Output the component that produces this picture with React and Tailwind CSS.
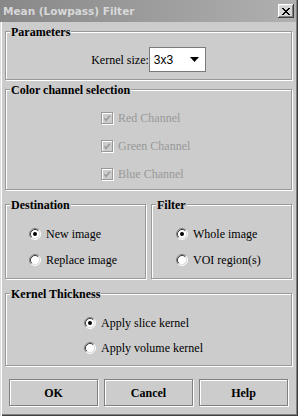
import React from "react";

function Group({ title, className, children }) {
  return (
    <div
      className={`flex flex-col border border-[#999999] shadow-[inset_1px_1px_0_#ffffff,1px_1px_0_#ffffff] ${className}`}
    >
      <span className="-mt-[7px] ml-[4px] w-fit bg-[#cccccc] px-px text-[12px] font-bold leading-[14px] text-black">
        {title}
      </span>
      {children}
    </div>
  );
}

function CheckRow({ label }) {
  return (
    <div className="flex h-[13px] items-center gap-[5px]">
      <span className="flex h-[12px] w-[12px] items-center justify-center border border-[#999999] shadow-[inset_1px_1px_0_#ffffff,1px_1px_0_#ffffff]">
        <svg width="8" height="8" viewBox="0 0 8 8">
          <path d="M1.5 4.2 L3 6.4 L6.8 1.8" stroke="#999999" strokeWidth="1.5" fill="none" />
        </svg>
      </span>
      <span className="leading-[14px] text-[#999999]">{label}</span>
    </div>
  );
}

function Radio({ checked }) {
  return (
    <svg width="12" height="12" viewBox="0 0 12 12" className="shrink-0">
      <circle cx="6" cy="6" r="4.5" fill="#ffffff" />
      <path d="M2.11 9.89A5.5 5.5 0 0 1 9.89 2.11" stroke="#808080" fill="none" />
      <path d="M9.89 2.11A5.5 5.5 0 0 1 2.11 9.89" stroke="#ffffff" fill="none" />
      <path d="M2.82 9.18A4.5 4.5 0 0 1 9.18 2.82" stroke="#404040" fill="none" />
      <path d="M9.18 2.82A4.5 4.5 0 0 1 2.82 9.18" stroke="#dfdfdf" fill="none" />
      {checked && <circle cx="6" cy="6" r="2" fill="#000000" />}
    </svg>
  );
}

function RadioRow({ label, checked }) {
  return (
    <div className="flex h-[13px] items-center gap-[5px]">
      <Radio checked={checked} />
      <span className="leading-[14px]">{label}</span>
    </div>
  );
}

function Button({ children }) {
  return (
    <button className="flex h-[27px] w-[89px] items-center justify-center border border-[#808080] bg-[#cccccc] font-bold leading-[14px] shadow-[inset_1px_1px_0_#ffffff,1px_1px_0_#ffffff]">
      {children}
    </button>
  );
}

export default function App() {
  return (
    <div className="flex h-[416px] w-[298px] flex-col bg-[#cccccc] font-[family-name:Liberation_Serif,serif] text-[12px] text-black shadow-[inset_1px_0_0_#dfdfdf,inset_2px_0_0_#ffffff,inset_-1px_-1px_0_#404040,inset_-2px_-2px_0_#808080]">
      {/* title bar */}
      <div className="mr-[2px] flex h-[22px] shrink-0 items-center justify-between bg-linear-to-r from-[#888888] to-[#b0b0b0] pl-[3px] pr-[2px]">
        <span className="font-[family-name:DejaVu_Sans,sans-serif] text-[10.5px] font-bold leading-none text-[#d8d8d8]">
          Mean (Lowpass) Filter
        </span>
        <span className="flex h-[14px] w-[16px] items-center justify-center bg-[#d4d4d4] shadow-[inset_-1px_-1px_0_#404040,inset_1px_1px_0_#ffffff,inset_-2px_-2px_0_#808080,inset_2px_2px_0_#dfdfdf]">
          <svg width="8" height="7" viewBox="0 0 8 7" shapeRendering="crispEdges">
            <path
              d="M0 0h2v1H0z M6 0h2v1H6z M1 1h2v1H1z M5 1h2v1H5z M2 2h4v1H2z M3 3h2v1H3z M2 4h4v1H2z M1 5h2v1H1z M5 5h2v1H5z M0 6h2v1H0z M6 6h2v1H6z"
              fill="#000000"
            />
          </svg>
        </span>
      </div>

      <div className="flex flex-col pl-[5px] pr-[6px]">
        {/* Parameters */}
        <Group title="Parameters" className="mt-[9px] h-[49px]">
          <div className="mt-[8px] flex items-center justify-center">
            <span className="leading-[14px]">Kernel size:</span>
            <div className="flex h-[25px] w-[57px] items-center justify-between border border-[#7a7a7a] bg-white pl-[4px] pr-[6px]">
              <span className="font-[family-name:Liberation_Sans,sans-serif] text-[12px] leading-none">3x3</span>
              <svg width="9" height="5" viewBox="0 0 9 5">
                <path d="M0 0h9L4.5 5z" fill="#000000" />
              </svg>
            </div>
          </div>
        </Group>

        {/* Color channel selection */}
        <Group title="Color channel selection" className="mt-[9px] h-[101px]">
          <div className="mt-[14px] flex flex-col gap-[15px] pl-[95px]">
            <CheckRow label="Red Channel" />
            <CheckRow label="Green Channel" />
            <CheckRow label="Blue Channel" />
          </div>
        </Group>

        {/* Destination + Filter */}
        <div className="mt-[14px] flex gap-[5px]">
          <Group title="Destination" className="h-[75px] w-[141px]">
            <div className="mt-[15px] flex flex-col gap-[13px] pl-[23px]">
              <RadioRow label="New image" checked />
              <RadioRow label="Replace image" />
            </div>
          </Group>
          <Group title="Filter" className="h-[75px] w-[141px]">
            <div className="mt-[15px] flex flex-col gap-[13px] pl-[24px]">
              <RadioRow label="Whole image" checked />
              <RadioRow label="VOI region(s)" />
            </div>
          </Group>
        </div>

        {/* Kernel Thickness */}
        <Group title="Kernel Thickness" className="mt-[14px] h-[73px]">
          <div className="mt-[15px] flex flex-col gap-[12px] pl-[78px]">
            <RadioRow label="Apply slice kernel" checked />
            <RadioRow label="Apply volume kernel" />
          </div>
        </Group>

        {/* buttons */}
        <div className="ml-[4px] mt-[13px] flex gap-[6px]">
          <Button>OK</Button>
          <Button>Cancel</Button>
          <Button>Help</Button>
        </div>
      </div>
    </div>
  );
}
